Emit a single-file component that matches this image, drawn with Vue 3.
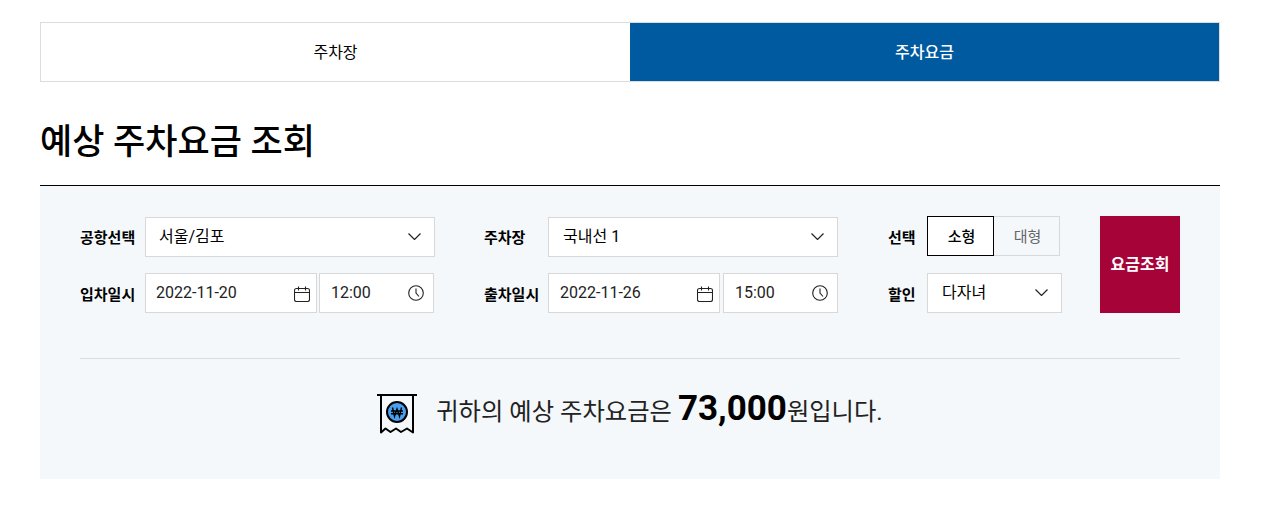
<template>
  <div class="page">
    <div class="tabs">
      <div class="tab">주차장</div>
      <div class="tab active">주차요금</div>
    </div>
    <h2 class="title">예상 주차요금 조회</h2>
    <section class="panel">
      <div class="form">
        <div class="col col-1">
          <span class="label">공항선택</span>
          <div class="field select wide"><span>서울/김포</span><svg class="chev" viewBox="0 0 13 7"><path d="M.5 .5l6 6 6-6" /></svg></div>
          <span class="label">입차일시</span>
          <div class="pair">
            <div class="field date"><span class="num">2022-11-20</span>
              <svg class="ico cal" viewBox="0 0 16 16"><rect x=".5" y="2.500" width="15" height="13" rx="2" /><path d="M.5 6.500h15M4.500 .5v4M11.500 .5v4" /></svg>
            </div>
            <div class="field time"><span class="num">12:00</span>
              <svg class="ico" viewBox="0 0 16 16"><circle cx="8" cy="8" r="7.300" /><path d="M8 3.500V8l3 3.500" /></svg>
            </div>
          </div>
        </div>
        <div class="col col-2">
          <span class="label">주차장</span>
          <div class="field select wide"><span>국내선 1</span><svg class="chev" viewBox="0 0 13 7"><path d="M.5 .5l6 6 6-6" /></svg></div>
          <span class="label">출차일시</span>
          <div class="pair">
            <div class="field date"><span class="num">2022-11-26</span>
              <svg class="ico cal" viewBox="0 0 16 16"><rect x=".5" y="2.500" width="15" height="13" rx="2" /><path d="M.5 6.500h15M4.500 .5v4M11.500 .5v4" /></svg>
            </div>
            <div class="field time"><span class="num">15:00</span>
              <svg class="ico" viewBox="0 0 16 16"><circle cx="8" cy="8" r="7.300" /><path d="M8 3.500V8l3 3.500" /></svg>
            </div>
          </div>
        </div>
        <div class="col col-3">
          <span class="label">선택</span>
          <div class="toggle">
            <div class="opt on">소형</div>
            <div class="opt">대형</div>
          </div>
          <span class="label">할인</span>
          <div class="field select small"><span>다자녀</span><svg class="chev" viewBox="0 0 13 7"><path d="M.5 .5l6 6 6-6" /></svg></div>
        </div>
        <button class="search"><span>요금조회</span></button>
      </div>
      <div class="result">
        <svg class="receipt" width="40" height="40" viewBox="0 0 40 40">
          <path class="r-line" d="M0 1h40" stroke-width="2" />
          <path class="r-line" d="M4 1V38.500L8.500 34.500 13.500 38 19 34.500 24 38 30 34.500 36 38.500V1" stroke-width="2" stroke-linejoin="round" />
          <circle cx="20" cy="18" r="10" fill="#4aa0f0" stroke="#000" stroke-width="2" />
          <path class="r-line" d="M15.500 13.500l2 9 2.500-7.500 2.500 7.500 2-9M14 17h12M14 19.800h12" stroke-width="1.400" />
        </svg>
        <p class="sum">귀하의 예상 주차요금은 <strong>73,000</strong>원입니다.</p>
      </div>
    </section>
  </div>
</template>

<script setup>
</script>

<style>
html, body {
  margin: 0;
  background: #fff;
}
</style>

<style scoped>
.page {
  width: 1180px;
  margin-left: 40px;
  padding-top: 22px;
  padding-bottom: 28px;
  font-family: Roboto, "Noto Sans CJK KR", sans-serif;
  color: #000;
}
.tabs {
  display: flex;
  height: 60px;
  box-sizing: border-box;
  border: 1px solid #dcdcdc;
}
.tab {
  flex: 1;
  display: flex;
  align-items: center;
  justify-content: center;
  padding-bottom: 2px;
  font-size: 16px;
  font-weight: 400;
  background: #fff;
}
.tab.active {
  background: #005aa0;
  color: #fff;
  font-weight: 500;
}
.title {
  margin: 0;
  height: 104px;
  box-sizing: border-box;
  padding-top: 39px;
  font-size: 35px;
  line-height: 44px;
  font-weight: 500;
  border-bottom: 1px solid #000;
}
.panel {
  background: #f4f8fb;
  height: 293px;
  box-sizing: border-box;
  padding: 30px 40px 0;
}
.form {
  display: flex;
  height: 143px;
  box-sizing: border-box;
  border-bottom: 1px solid #dcdcdc;
}
.col {
  display: grid;
  grid-template-rows: 41px 40px;
  row-gap: 16px;
  align-items: center;
  align-self: flex-start;
}
.col-1 { grid-template-columns: 65px auto; margin-right: 49px; }
.col-2 { grid-template-columns: 64px auto; margin-right: 50px; }
.col-3 { grid-template-columns: 39px auto; margin-right: 38px; }
.col-2 .pair { gap: 3px; }
.col-2 .select, .col-3 .select { padding-left: 14px; }
.col-2 .date { padding-left: 11px; }
.label {
  font-size: 15px;
  font-weight: 700;
  white-space: nowrap;
}
.field {
  display: flex;
  align-items: center;
  justify-content: space-between;
  box-sizing: border-box;
  background: #fff;
  border: 1px solid #d8d8d8;
  font-size: 16px;
  height: 40px;
}
.select {
  padding: 0 13px 0 13px;
}
.select span {
  margin-bottom: 3px;
}
.col-3 .select span {
  margin-bottom: 5px;
}
.wide { width: 290px; }
.small { width: 135px; }
.pair {
  display: flex;
  gap: 2px;
}
.date {
  width: 172px;
  padding: 0 6px 0 10px;
}
.time {
  width: 115px;
  padding: 0 9px 0 11px;
}
.num {
  margin-bottom: 2px;
  font-size: 16px;
  color: #222;
}
.chev {
  width: 13px;
  height: 7px;
  margin-bottom: 1px;
  fill: none;
  stroke: #222;
  stroke-width: 1.200;
}
.ico {
  width: 16px;
  height: 16px;
  margin-bottom: 1px;
  fill: none;
  stroke: #222;
  stroke-width: 1.100;
}
.cal {
  margin-bottom: 0;
  margin-top: 1px;
}
.toggle {
  display: flex;
  width: 133px;
  height: 40px;
  box-sizing: border-box;
  margin-top: -1px;
}
.opt {
  flex: 1;
  display: flex;
  align-items: center;
  justify-content: center;
  padding: 0 0 2px 2px;
  font-size: 15px;
  font-weight: 400;
  color: #666;
  border: 1px solid #d8d8d8;
  border-left: none;
}
.opt.on {
  color: #000;
  font-weight: 500;
  background: #fff;
  border: 1px solid #000;
}
.search {
  width: 80px;
  height: 97px;
  border: none;
  background: #a60339;
  color: #fff;
  font: 700 16px Roboto, "Noto Sans CJK KR", sans-serif;
  padding: 0 0 4px;
}
.result {
  display: flex;
  align-items: center;
  justify-content: center;
  gap: 19px;
  padding-top: 28px;
}
.r-line {
  fill: none;
  stroke: #000;
}
.sum {
  margin: 0 0 6px;
  font-size: 24.300px;
  line-height: 44px;
  color: #222;
}
.sum strong {
  font-size: 35px;
  font-weight: 700;
  color: #000;
}
</style>
